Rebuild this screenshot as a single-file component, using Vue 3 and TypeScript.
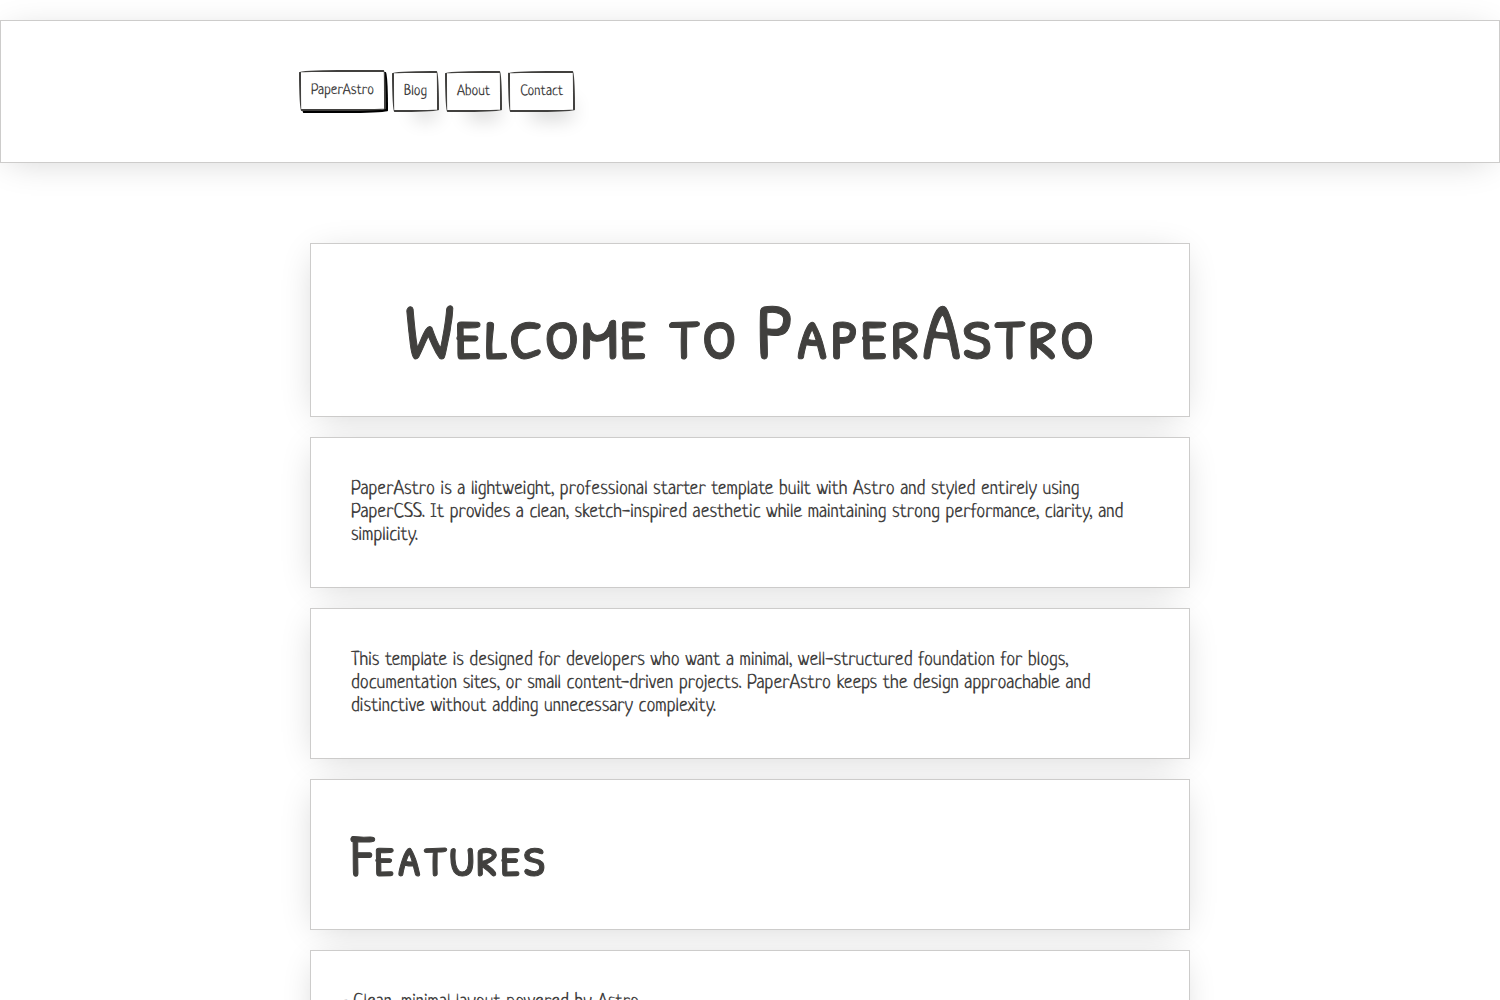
<script setup lang="ts">
interface NavItem {
  label: string
  href: string
  brand?: boolean
}

const navItems: NavItem[] = [
  { label: 'PaperAstro', href: '#home', brand: true },
  { label: 'Blog', href: '#blog' },
  { label: 'About', href: '#about' },
  { label: 'Contact', href: '#contact' },
]

const paragraphs: string[] = [
  'PaperAstro is a lightweight, professional starter template built with Astro and styled entirely using PaperCSS. It provides a clean, sketch-inspired aesthetic while maintaining strong performance, clarity, and simplicity.',
  'This template is designed for developers who want a minimal, well-structured foundation for blogs, documentation sites, or small content-driven projects. PaperAstro keeps the design approachable and distinctive without adding unnecessary complexity.',
]

const features: string[] = ['Clean, minimal layout powered by Astro']
</script>

<template>
  <div class="page">
    <header class="paper site-header">
      <nav class="nav" aria-label="Main">
        <a
          v-for="item in navItems"
          :key="item.label"
          :href="item.href"
          class="btn"
          :class="{ brand: item.brand }"
        >{{ item.label }}</a>
      </nav>
    </header>

    <main class="content">
      <section class="paper card">
        <h1>Welcome to PaperAstro</h1>
      </section>
      <section v-for="text in paragraphs" :key="text" class="paper card">
        <p>{{ text }}</p>
      </section>
      <section class="paper card">
        <h2>Features</h2>
      </section>
      <section class="paper card">
        <ul class="features">
          <li v-for="feature in features" :key="feature">{{ feature }}</li>
        </ul>
      </section>
    </main>
  </div>
</template>

<style>
body {
  background: #fff;
}
</style>

<style scoped>
.page {
  padding: 20px 0;
  color: #41403e;
  font-family: Neucha, "Open Sans", sans-serif;
  font-size: 20px;
  line-height: 23px;
  text-rendering: geometricPrecision;
}

.paper {
  box-sizing: border-box;
  background: #fff;
  border: 1px solid #cdcccb;
  box-shadow: -1px 5px 35px -9px rgba(0, 0, 0, 0.2);
}

.site-header {
  padding: 50px 20px;
}

.nav {
  display: flex;
  gap: 6px;
  max-width: 902px;
  margin: 0 auto;
}

.btn {
  padding: 11px 10px 9px;
  border: 2px solid #41403e;
  border-radius: 255px 15px 225px 15px / 15px 225px 15px 255px;
  box-shadow: 10px 19px 20px -13px rgba(0, 0, 0, 0.2);
  background: #fff;
  color: #41403e;
  font-size: 15px;
  line-height: 17px;
  text-decoration: none;
}

.brand {
  box-shadow: 2px 2px 0 #000;
  transform: translateY(-1px);
}

.content {
  display: flex;
  flex-direction: column;
  gap: 20px;
  max-width: 880px;
  margin: 80px auto 0;
}

.card {
  padding: 40px;
}

h1,
h2,
p,
ul {
  margin: 0;
}

h1,
h2 {
  font-family: "Patrick Hand SC", Lato, sans-serif;
  font-weight: 400;
  -webkit-text-stroke: 1px #41403e;
}

h1 {
  font-size: 80px;
  line-height: 92px;
  text-align: center;
}

h2 {
  font-size: 60px;
  line-height: 69px;
}

.features {
  padding: 0 0 0 2px;
  list-style: none;
}

.features li::before {
  content: "-";
  display: inline-block;
  width: 13px;
  margin-left: -13px;
}
</style>
